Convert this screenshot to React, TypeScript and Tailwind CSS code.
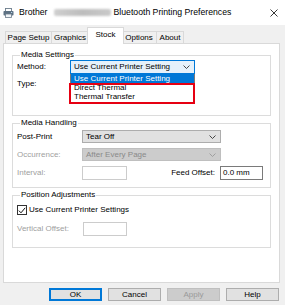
import React from "react";

const Chevron = ({ color = "#333" }: { color?: string }) => (
  <svg width="7" height="4" viewBox="0 0 7 4" className="shrink-0">
    <path d="M0.5 0.5 L3.5 3.5 L6.5 0.5" fill="none" stroke={color} strokeWidth="0.9" />
  </svg>
);

const Tab = ({ label, w, selected }: { label: string; w: string; selected?: boolean }) =>
  selected ? (
    <div className={`relative z-10 -mb-px -mx-[2px] flex h-[17px] ${w} items-start justify-center border border-b-0 border-[#d9d9d9] bg-white pt-[2px]`}>
      <span className="leading-[10px]">{label}</span>
    </div>
  ) : (
    <div className={`flex h-[12px] ${w} items-center justify-center border border-b-0 border-[#d9d9d9] bg-[#f0f0f0] -ml-px first:ml-0`}>
      <span className="leading-[10px]">{label}</span>
    </div>
  );

export default function App() {
  return (
    <div
      className="flex h-[305px] w-[285px] flex-col overflow-hidden bg-[#f0f0f0] text-[8px] text-black"
      style={{ fontFamily: '"Liberation Sans", Arial, sans-serif' }}
    >
      {/* Title bar */}
      <div className="flex h-[25px] shrink-0 items-center bg-white pl-[3px] pr-[7px] text-[8.7px]">
        <svg width="11" height="10" viewBox="0 0 11 10" className="mr-[5px]">
          <rect x="2.5" y="0.5" width="6" height="3" fill="#fff" stroke="#6b7c8c" strokeWidth="0.9" />
          <rect x="0.5" y="3" width="10" height="4.5" rx="0.8" fill="#5d7183" />
          <rect x="2.5" y="6" width="6" height="3.5" fill="#eef2f5" stroke="#6b7c8c" strokeWidth="0.8" />
          <rect x="8" y="4" width="1.2" height="1" fill="#b8d2e6" />
        </svg>
        <span className="leading-none">Brother</span>
        <div className="ml-[6px] mr-[3px] h-[7px] w-[57px] rounded-[2px] bg-gradient-to-r from-[#cfcfcf] via-[#bdbdbd] to-[#c9c9c9] blur-[1.2px]" />
        <span className="leading-none">Bluetooth Printing Preferences</span>
        <div className="flex-1" />
        <svg width="8" height="8" viewBox="0 0 8 8">
          <path d="M0.5 0.5 L7.5 7.5 M7.5 0.5 L0.5 7.5" stroke="#222" strokeWidth="0.9" />
        </svg>
      </div>

      {/* Tabs */}
      <div className="flex h-[18px] shrink-0 items-end pl-[5px]">
        <Tab label="Page Setup" w="w-[47px]" />
        <Tab label="Graphics" w="w-[38px]" />
        <Tab label="Stock" w="w-[37px]" selected />
        <Tab label="Options" w="w-[36px]" />
        <Tab label="About" w="w-[28px]" />
      </div>

      {/* Panel */}
      <div className="ml-[3px] flex h-[240px] w-[277px] shrink-0 flex-col border border-[#d9d9d9] bg-white px-[8px] pt-[6px]">
        {/* Media Settings */}
        <fieldset className="h-[66px] border border-[#dcdcdc] px-[4px]">
          <legend className="ml-[3px] px-[1px] leading-[10px]">Media Settings</legend>
          <div className="flex h-[14px] items-center">
            <span className="w-[53px]">Method:</span>
            <div className="relative">
              <div className="flex h-[14px] w-[125px] items-center justify-between border border-[#0078d7] bg-[#e5f1fb] pl-[3px] pr-[4px]">
                <span>Use Current Printer Setting</span>
                <Chevron />
              </div>
              {/* Dropdown list */}
              <div className="absolute left-0 top-full z-20 h-[30px] w-[125px] border border-t-0 border-[#7a7a7a] bg-white">
                <div className="flex h-[9px] items-center bg-[#0078d7] pl-[3px] text-white">Use Current Printer Setting</div>
                <div className="flex h-[9px] items-center pl-[3px]">Direct Thermal</div>
                <div className="flex h-[9px] items-center pl-[3px]">Thermal Transfer</div>
              </div>
              <div className="pointer-events-none absolute left-[-1px] top-[23px] z-30 h-[21px] w-[126px] border-2 border-[#e60012]" />
            </div>
          </div>
          <div className="mt-[5px] flex h-[10px] items-center">Type:</div>
        </fieldset>

        {/* Media Handling */}
        <fieldset className="mt-[2px] h-[70px] border border-[#dcdcdc] px-[4px]">
          <legend className="ml-[3px] px-[1px] leading-[10px]">Media Handling</legend>
          <div className="mt-[2px] flex h-[13px] items-center">
            <span className="w-[65px]">Post-Print</span>
            <div className="flex h-[13px] w-[139px] items-center justify-between border border-[#adadad] bg-[#e1e1e1] pl-[3px] pr-[4px]">
              <span>Tear Off</span>
              <Chevron />
            </div>
          </div>
          <div className="mt-[5px] flex h-[13px] items-center text-[#a0a0a0]">
            <span className="w-[65px]">Occurrence:</span>
            <div className="flex h-[13px] w-[139px] items-center justify-between border border-[#bfbfbf] bg-[#cccccc] pl-[3px] pr-[4px] text-[#8a8a8a]">
              <span>After Every Page</span>
              <Chevron color="#9a9a9a" />
            </div>
          </div>
          <div className="mt-[5px] flex h-[14px] items-center">
            <span className="w-[65px] text-[#a0a0a0]">Interval:</span>
            <div className="h-[14px] w-[45px] border border-[#cccccc] bg-white" />
            <span className="ml-auto mr-[5px]">Feed Offset:</span>
            <div className="flex h-[14px] w-[43px] items-center border border-[#7a7a7a] bg-white pl-[2px]">0.0 mm</div>
            <div className="w-[3px]" />
          </div>
        </fieldset>

        {/* Position Adjustments */}
        <fieldset className="mt-[2px] h-[58px] border border-[#dcdcdc] px-[4px]">
          <legend className="ml-[3px] px-[1px] leading-[10px]">Position Adjustments</legend>
          <div className="mt-[5px] flex h-[10px] items-center">
            <div className="mr-[2px] flex h-[10px] w-[10px] items-center justify-center border border-[#333] bg-white">
              <svg width="8" height="7" viewBox="0 0 8 7">
                <path d="M0.8 3.6 L3 5.8 L7.2 0.8" fill="none" stroke="#111" strokeWidth="1" />
              </svg>
            </div>
            <span>Use Current Printer Settings</span>
          </div>
          <div className="mt-[7px] flex h-[14px] items-center">
            <span className="w-[66px] text-[#a0a0a0]">Vertical Offset:</span>
            <div className="h-[14px] w-[44px] border border-[#cccccc] bg-white" />
          </div>
        </fieldset>
      </div>

      {/* Buttons */}
      <div className="mt-[5px] flex shrink-0 justify-end gap-[6px] pr-[6px]">
        <div className="flex h-[13px] w-[53px] items-center justify-center border border-[#0078d7] bg-[#e1e1e1] shadow-[inset_0_0_0_1px_#0078d7]">OK</div>
        <div className="flex h-[13px] w-[53px] items-center justify-center border border-[#adadad] bg-[#e1e1e1]">Cancel</div>
        <div className="flex h-[13px] w-[53px] items-center justify-center border border-[#bfbfbf] bg-[#cccccc] text-[#9a9a9a]">Apply</div>
        <div className="flex h-[13px] w-[53px] items-center justify-center border border-[#adadad] bg-[#e1e1e1]">Help</div>
      </div>
    </div>
  );
}
